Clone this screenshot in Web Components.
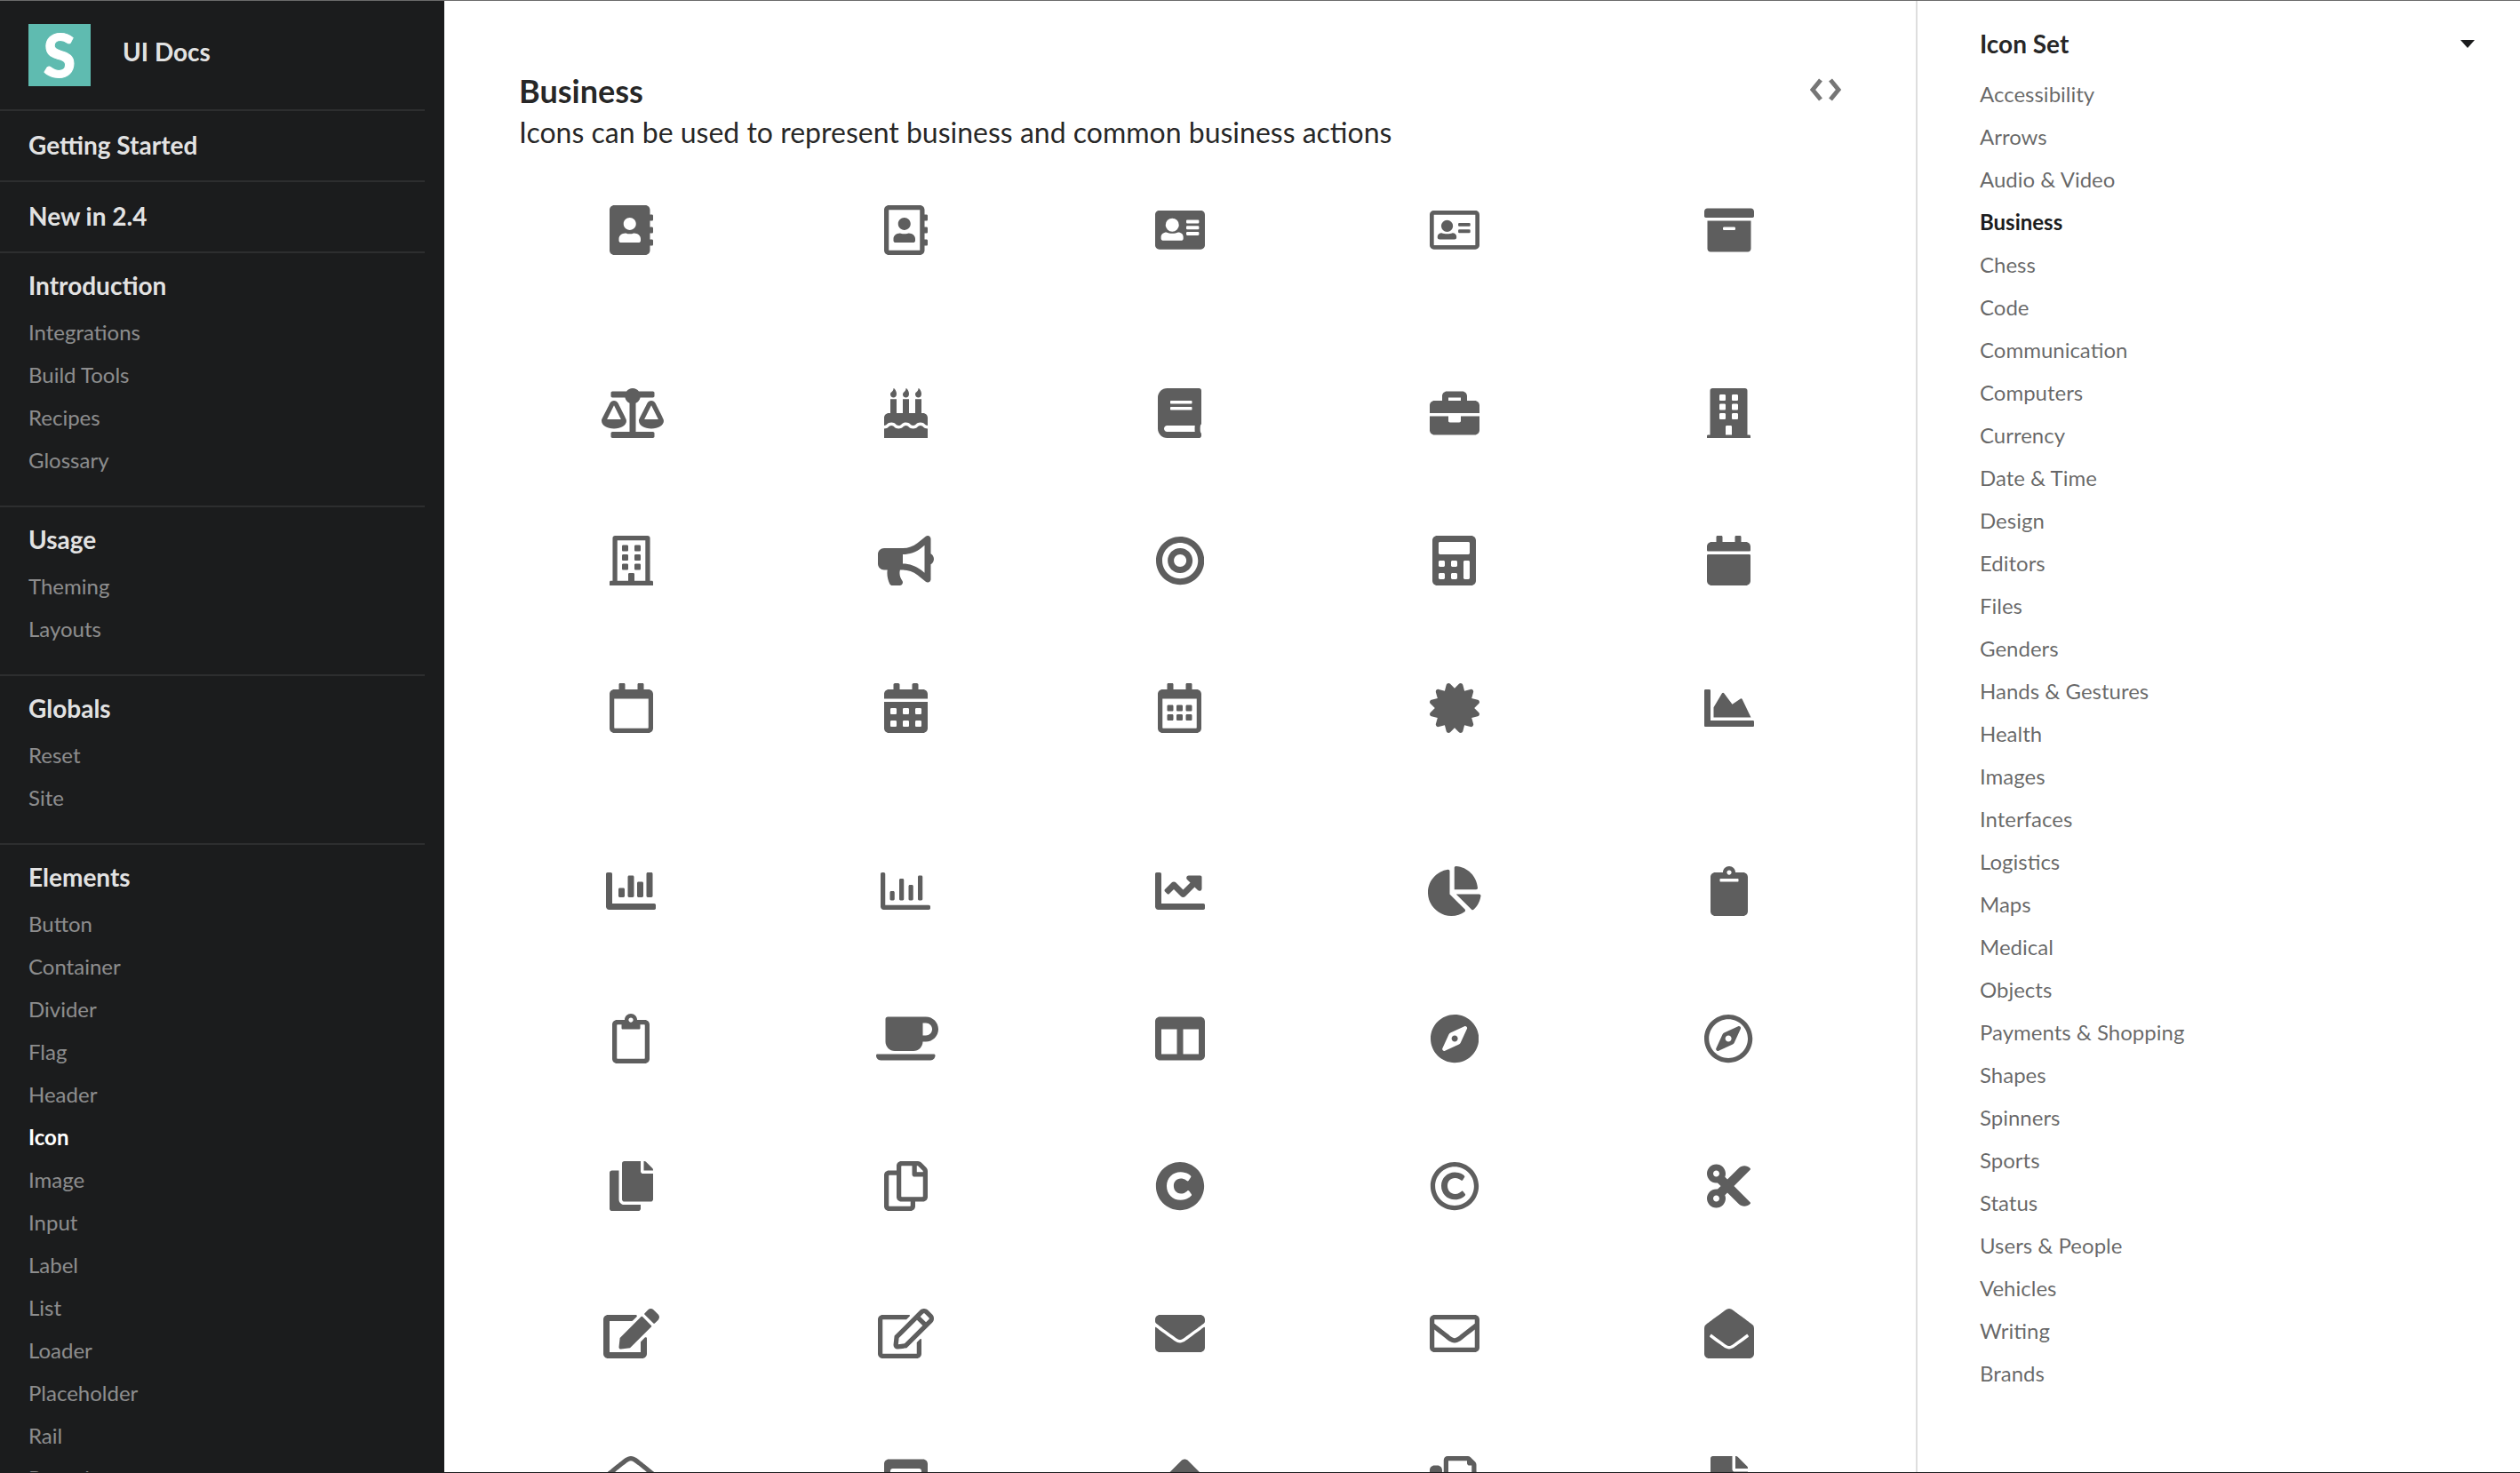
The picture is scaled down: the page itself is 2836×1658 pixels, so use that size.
<!DOCTYPE html>
<html>
<head>
<meta charset="utf-8">
<title>UI Docs</title>
<style>
	html, body { margin: 0; height: 100%; background: #fff; overflow: hidden; }
</style>
</head>
<body>

<ui-docs>
	<ui-sidebar slot="left">
		<ui-logo>UI Docs</ui-logo>
		<ui-side-head>Getting Started</ui-side-head>
		<ui-side-head>New in 2.4</ui-side-head>
		<ui-side-group label="Introduction">
			<ui-side-link>Integrations</ui-side-link>
			<ui-side-link>Build Tools</ui-side-link>
			<ui-side-link>Recipes</ui-side-link>
			<ui-side-link>Glossary</ui-side-link>
		</ui-side-group>
		<ui-side-group label="Usage">
			<ui-side-link>Theming</ui-side-link>
			<ui-side-link>Layouts</ui-side-link>
		</ui-side-group>
		<ui-side-group label="Globals">
			<ui-side-link>Reset</ui-side-link>
			<ui-side-link>Site</ui-side-link>
		</ui-side-group>
		<ui-side-group label="Elements">
			<ui-side-link>Button</ui-side-link>
			<ui-side-link>Container</ui-side-link>
			<ui-side-link>Divider</ui-side-link>
			<ui-side-link>Flag</ui-side-link>
			<ui-side-link>Header</ui-side-link>
			<ui-side-link active>Icon</ui-side-link>
			<ui-side-link>Image</ui-side-link>
			<ui-side-link>Input</ui-side-link>
			<ui-side-link>Label</ui-side-link>
			<ui-side-link>List</ui-side-link>
			<ui-side-link>Loader</ui-side-link>
			<ui-side-link>Placeholder</ui-side-link>
			<ui-side-link>Rail</ui-side-link>
			<ui-side-link>Reveal</ui-side-link>
			<ui-side-link>Segment</ui-side-link>
		</ui-side-group>
	</ui-sidebar>

	<ui-icon-section slot="main" heading="Business" text="Icons can be used to represent business and common business actions"
		icons="address-book address-book-o address-card address-card-o archive
			balance-scale birthday-cake book briefcase building
			building-o bullhorn bullseye calculator calendar
			calendar-o calendar-alt calendar-alt-o certificate chart-area
			chart-bar chart-bar-o chart-line chart-pie clipboard
			clipboard-o coffee columns compass compass-o
			copy copy-o copyright copyright-o cut
			edit edit-o envelope envelope-o envelope-open
			envelope-open-o envelope-square eraser fax file"></ui-icon-section>

	<ui-toc slot="right" label="Icon Set">
		<ui-toc-link>Accessibility</ui-toc-link>
		<ui-toc-link>Arrows</ui-toc-link>
		<ui-toc-link>Audio &amp; Video</ui-toc-link>
		<ui-toc-link active>Business</ui-toc-link>
		<ui-toc-link>Chess</ui-toc-link>
		<ui-toc-link>Code</ui-toc-link>
		<ui-toc-link>Communication</ui-toc-link>
		<ui-toc-link>Computers</ui-toc-link>
		<ui-toc-link>Currency</ui-toc-link>
		<ui-toc-link>Date &amp; Time</ui-toc-link>
		<ui-toc-link>Design</ui-toc-link>
		<ui-toc-link>Editors</ui-toc-link>
		<ui-toc-link>Files</ui-toc-link>
		<ui-toc-link>Genders</ui-toc-link>
		<ui-toc-link>Hands &amp; Gestures</ui-toc-link>
		<ui-toc-link>Health</ui-toc-link>
		<ui-toc-link>Images</ui-toc-link>
		<ui-toc-link>Interfaces</ui-toc-link>
		<ui-toc-link>Logistics</ui-toc-link>
		<ui-toc-link>Maps</ui-toc-link>
		<ui-toc-link>Medical</ui-toc-link>
		<ui-toc-link>Objects</ui-toc-link>
		<ui-toc-link>Payments &amp; Shopping</ui-toc-link>
		<ui-toc-link>Shapes</ui-toc-link>
		<ui-toc-link>Spinners</ui-toc-link>
		<ui-toc-link>Sports</ui-toc-link>
		<ui-toc-link>Status</ui-toc-link>
		<ui-toc-link>Users &amp; People</ui-toc-link>
		<ui-toc-link>Vehicles</ui-toc-link>
		<ui-toc-link>Writing</ui-toc-link>
		<ui-toc-link>Brands</ui-toc-link>
	</ui-toc>
</ui-docs>

<script>
// shapes: [viewBox width, path, extra]
const GLYPHS = {
	'address-book': [448, 'M436 160c6.6 0 12-5.4 12-12v-40c0-6.6-5.4-12-12-12h-20V48c0-26.5-21.5-48-48-48H48C21.5 0 0 21.5 0 48v416c0 26.5 21.5 48 48 48h320c26.5 0 48-21.5 48-48v-48h20c6.6 0 12-5.4 12-12v-40c0-6.6-5.4-12-12-12h-20v-64h20c6.6 0 12-5.4 12-12v-40c0-6.6-5.4-12-12-12h-20v-64h20zm-228-32c35.3 0 64 28.7 64 64s-28.7 64-64 64-64-28.7-64-64 28.7-64 64-64zm112 236.8c0 10.6-10 19.2-22.4 19.2H118.4C106 384 96 375.4 96 364.8v-19.2c0-31.8 30.1-57.6 67.2-57.6h5c12.3 5.1 25.7 8 39.8 8s27.6-2.9 39.8-8h5c37.1 0 67.2 25.8 67.2 57.6v19.2z'],
	'address-book-o': [448, 'M436 160c6.6 0 12-5.4 12-12v-40c0-6.6-5.4-12-12-12h-20V48c0-26.5-21.5-48-48-48H48C21.5 0 0 21.5 0 48v416c0 26.5 21.5 48 48 48h320c26.5 0 48-21.5 48-48v-48h20c6.6 0 12-5.4 12-12v-40c0-6.6-5.4-12-12-12h-20v-64h20c6.6 0 12-5.4 12-12v-40c0-6.6-5.4-12-12-12h-20v-64h20zm-68 304H48V48h320v416zM208 256c35.3 0 64-28.7 64-64s-28.7-64-64-64-64 28.7-64 64 28.7 64 64 64zm-89.6 128h179.2c12.4 0 22.4-8.6 22.4-19.2v-19.2c0-31.8-30.1-57.6-67.2-57.6-10.8 0-18.7 8-44.8 8-26.9 0-33.4-8-44.8-8-37.1 0-67.2 25.8-67.2 57.6v19.2c0 10.6 10 19.2 22.4 19.2z'],
	'address-card': [576, 'M528 32H48C21.5 32 0 53.5 0 80v352c0 26.5 21.5 48 48 48h480c26.5 0 48-21.5 48-48V80c0-26.5-21.5-48-48-48zM198 120a77 77 0 1 0 0 154a77 77 0 1 0 0-154zM130 282c20 10 42 14 68 14s48-4 68-14c36 0 60 24 60 54v18c0 14-12 24-26 24H96c-14 0-28-10-28-24v-18c0-30 26-54 62-54zM372 138h124a12 12 0 0 1 12 12v17a12 12 0 0 1-12 12H372a12 12 0 0 1-12-12v-17a12 12 0 0 1 12-12zM372 209h124a12 12 0 0 1 12 12v17a12 12 0 0 1-12 12H372a12 12 0 0 1-12-12v-17a12 12 0 0 1 12-12zM372 278h124a12 12 0 0 1 12 12v17a12 12 0 0 1-12 12H372a12 12 0 0 1-12-12v-17a12 12 0 0 1 12-12z', {eo: true, rw: 56}],
	'address-card-o': [576, 'M528 32H48C21.5 32 0 53.5 0 80v352c0 26.5 21.5 48 48 48h480c26.5 0 48-21.5 48-48V80c0-26.5-21.5-48-48-48zM48 80h480v352H48zM201 141a68 68 0 1 0 0 136a68 68 0 1 0 0-136zM138 290c18 8 38 12 63 12s45-4 63-12c28 0 46 18 46 42v12c0 12-10 20-22 20H114c-12 0-24-8-24-20v-12c0-24 20-42 48-42zM342 174h116a12 12 0 0 1 12 12v16a12 12 0 0 1-12 12H342a12 12 0 0 1-12-12v-16a12 12 0 0 1 12-12zM342 250h116a12 12 0 0 1 12 12v16a12 12 0 0 1-12 12H342a12 12 0 0 1-12-12v-16a12 12 0 0 1 12-12z', {eo: true, rw: 56}],
	'archive': [512, 'M32 448c0 17.7 14.3 32 32 32h384c17.7 0 32-14.3 32-32V160H32v288zm160-212c0-6.6 5.4-12 12-12h104c6.6 0 12 5.4 12 12v8c0 6.6-5.4 12-12 12H204c-6.6 0-12-5.4-12-12v-8zM480 32H32C14.3 32 0 46.3 0 64v48c0 8.8 7.2 16 16 16h480c8.8 0 16-7.2 16-16V64c0-17.7-14.3-32-32-32z'],
	'balance-scale': [640, 'M256 336h-.02c0-16.18 1.34-8.73-85.05-181.51-17.65-35.29-68.19-35.36-85.87 0C-2.06 328.75.02 320.33.02 336H0c0 44.18 57.31 80 128 80s128-35.82 128-80zM128 176l72 144H56l72-144zm511.98 160c0-16.18 1.34-8.73-85.05-181.51-17.65-35.29-68.19-35.36-85.87 0-87.12 174.26-85.04 165.84-85.04 181.51H384c0 44.18 57.31 80 128 80s128-35.82 128-80h-.02zM440 320l72-144 72 144H440zm88 128H352V153.25c23.51-10.29 41.16-31.48 46.39-57.25H528c8.84 0 16-7.16 16-16V48c0-8.84-7.16-16-16-16H383.64C369.04 12.68 346.09 0 320 0s-49.04 12.68-63.64 32H112c-8.84 0-16 7.16-16 16v32c0 8.84 7.16 16 16 16h129.61c5.23 25.76 22.87 46.96 46.39 57.25V448H112c-8.84 0-16 7.16-16 16v32c0 8.84 7.16 16 16 16h416c8.84 0 16-7.16 16-16v-32c0-8.84-7.16-16-16-16z', {dx: 3}],
	'birthday-cake': [448, 'M448 384c-28.02 0-31.26-32-74.5-32-43.43 0-46.825 32-74.75 32-27.695 0-31.454-32-74.75-32-42.842 0-47.218 32-74.5 32-28.148 0-31.202-32-74.75-32-43.547 0-46.653 32-74.75 32v-80c0-26.5 21.5-48 48-48h16V112h64v144h64V112h64v144h64V112h64v144h16c26.5 0 48 21.5 48 48v80zm0 128H0v-96c43.356 0 46.767-32 74.75-32 27.951 0 31.253 32 74.75 32 42.843 0 47.217-32 74.5-32 28.148 0 31.201 32 74.75 32 43.357 0 46.767-32 74.75-32 27.488 0 31.252 32 74.5 32v96zM96 96c-17.75 0-32-14.25-32-32 0-31 32-23 32-64 12 0 32 29.5 32 56s-14.25 40-32 40zm128 0c-17.75 0-32-14.25-32-32 0-31 32-23 32-64 12 0 32 29.5 32 56s-14.25 40-32 40zm128 0c-17.75 0-32-14.25-32-32 0-31 32-23 32-64 12 0 32 29.5 32 56s-14.25 40-32 40z'],
	'book': [448, 'M448 360V24c0-13.3-10.7-24-24-24H96C43 0 0 43 0 96v320c0 53 43 96 96 96h328c13.3 0 24-10.7 24-24v-16c0-7.5-3.5-14.3-8.9-18.7-4.2-15.4-4.2-59.3 0-74.7 5.4-4.3 8.9-11.1 8.9-18.6zM128 134c0-3.3 2.7-6 6-6h212c3.3 0 6 2.7 6 6v20c0 3.3-2.7 6-6 6H134c-3.3 0-6-2.7-6-6v-20zm0 64c0-3.3 2.7-6 6-6h212c3.3 0 6 2.7 6 6v20c0 3.3-2.7 6-6 6H134c-3.3 0-6-2.7-6-6v-20zm253.4 250H96c-17.7 0-32-14.3-32-32 0-17.6 14.4-32 32-32h285.4c-1.9 17.1-1.9 46.9 0 64z'],
	'briefcase': [512, 'M320 336c0 8.84-7.16 16-16 16h-96c-8.84 0-16-7.16-16-16v-48H0v144c0 25.6 22.4 48 48 48h416c25.6 0 48-22.4 48-48V288H320v48zm144-208h-80V80c0-25.6-22.4-48-48-48H176c-25.6 0-48 22.4-48 48v48H48c-25.6 0-48 22.4-48 48v80h512v-80c0-25.6-22.4-48-48-48zm-144 0H192V96h128v32z'],
	'building': [448, 'M436 480h-20V24c0-13.255-10.745-24-24-24H56C42.745 0 32 10.745 32 24v456H12c-6.627 0-12 5.373-12 12v20h448v-20c0-6.627-5.373-12-12-12zM128 76c0-6.627 5.373-12 12-12h40c6.627 0 12 5.373 12 12v40c0 6.627-5.373 12-12 12h-40c-6.627 0-12-5.373-12-12V76zm0 96c0-6.627 5.373-12 12-12h40c6.627 0 12 5.373 12 12v40c0 6.627-5.373 12-12 12h-40c-6.627 0-12-5.373-12-12v-40zm52 148h-40c-6.627 0-12-5.373-12-12v-40c0-6.627 5.373-12 12-12h40c6.627 0 12 5.373 12 12v40c0 6.627-5.373 12-12 12zm76 160h-64v-84c0-6.627 5.373-12 12-12h40c6.627 0 12 5.373 12 12v84zm64-172c0 6.627-5.373 12-12 12h-40c-6.627 0-12-5.373-12-12v-40c0-6.627 5.373-12 12-12h40c6.627 0 12 5.373 12 12v40zm0-96c0 6.627-5.373 12-12 12h-40c-6.627 0-12-5.373-12-12v-40c0-6.627 5.373-12 12-12h40c6.627 0 12 5.373 12 12v40zm0-96c0 6.627-5.373 12-12 12h-40c-6.627 0-12-5.373-12-12V76c0-6.627 5.373-12 12-12h40c6.627 0 12 5.373 12 12v40z'],
	'building-o': [448, 'M128 148v-40c0-6.6 5.4-12 12-12h40c6.6 0 12 5.4 12 12v40c0 6.6-5.4 12-12 12h-40c-6.6 0-12-5.4-12-12zm140 12h40c6.6 0 12-5.4 12-12v-40c0-6.6-5.4-12-12-12h-40c-6.6 0-12 5.4-12 12v40c0 6.6 5.4 12 12 12zm-128 96h40c6.6 0 12-5.4 12-12v-40c0-6.6-5.4-12-12-12h-40c-6.6 0-12 5.4-12 12v40c0 6.6 5.4 12 12 12zm128 0h40c6.6 0 12-5.4 12-12v-40c0-6.6-5.4-12-12-12h-40c-6.6 0-12 5.4-12 12v40c0 6.6 5.4 12 12 12zm-76 84v-40c0-6.6-5.4-12-12-12h-40c-6.6 0-12 5.4-12 12v40c0 6.6 5.4 12 12 12h40c6.6 0 12-5.4 12-12zm76 12h40c6.6 0 12-5.4 12-12v-40c0-6.6-5.4-12-12-12h-40c-6.6 0-12 5.4-12 12v40c0 6.6 5.4 12 12 12zm180 124v36H0v-36c0-6.6 5.4-12 12-12h19.5V24c0-13.3 10.7-24 24-24h337c13.3 0 24 10.7 24 24v440H436c6.6 0 12 5.4 12 12zM79.5 463H192v-67c0-6.6 5.4-12 12-12h40c6.6 0 12 5.4 12 12v67h112.5V49L80 48l-.5 415z'],
	'bullhorn': [576, 'M576 240c0-23.63-12.95-44.04-32-55.12V32.01C544 23.26 537.02 0 512 0c-7.12 0-14.19 2.38-19.98 7.02l-85.03 68.03C364.28 109.19 310.66 128 256 128H64c-35.35 0-64 28.65-64 64v96c0 35.35 28.65 64 64 64h33.7c-1.39 10.48-2.18 21.14-2.18 32 0 39.77 9.26 77.35 25.56 110.94 5.19 10.69 16.52 17.06 28.4 17.06h74.28c26.05 0 41.69-29.84 25.9-50.56-16.4-21.52-26.15-48.36-26.15-77.44 0-11.11 1.62-21.79 4.41-32H256c54.66 0 108.28 18.81 150.98 52.95l85.03 68.03a32.023 32.023 0 0 0 19.98 7.02c24.92 0 32-22.78 32-32V295.13C563.05 284.04 576 263.63 576 240zm-96 141.42l-33.05-26.44C392.95 311.78 325.12 288 256 288v-96c69.12 0 136.95-23.78 190.95-66.98L480 98.58v282.84z'],
	'bullseye': [496, 'M248 8C111.03 8 0 119.03 0 256s111.03 248 248 248 248-111.03 248-248S384.97 8 248 8zm0 432c-101.69 0-184-82.29-184-184 0-101.69 82.29-184 184-184 101.69 0 184 82.29 184 184 0 101.69-82.29 184-184 184zm0-312c-70.69 0-128 57.31-128 128s57.31 128 128 128 128-57.31 128-128-57.31-128-128-128zm0 192c-35.29 0-64-28.71-64-64s28.71-64 64-64 64 28.71 64 64-28.71 64-64 64z'],
	'calculator': [448, 'M400 0H48C22.4 0 0 22.4 0 48v416c0 25.6 22.4 48 48 48h352c25.6 0 48-22.4 48-48V48c0-25.6-22.4-48-48-48zM128 435.2c0 6.4-6.4 12.8-12.8 12.8H76.8c-6.4 0-12.8-6.4-12.8-12.8v-38.4c0-6.4 6.4-12.8 12.8-12.8h38.4c6.4 0 12.8 6.4 12.8 12.8v38.4zm0-128c0 6.4-6.4 12.8-12.8 12.8H76.8c-6.4 0-12.8-6.4-12.8-12.8v-38.4c0-6.4 6.4-12.8 12.8-12.8h38.4c6.4 0 12.8 6.4 12.8 12.8v38.4zm128 128c0 6.4-6.4 12.8-12.8 12.8h-38.4c-6.4 0-12.8-6.4-12.8-12.8v-38.4c0-6.4 6.4-12.8 12.8-12.8h38.4c6.4 0 12.8 6.4 12.8 12.8v38.4zm0-128c0 6.4-6.4 12.8-12.8 12.8h-38.4c-6.4 0-12.8-6.4-12.8-12.8v-38.4c0-6.4 6.4-12.8 12.8-12.8h38.4c6.4 0 12.8 6.4 12.8 12.8v38.4zm128 128c0 6.4-6.4 12.8-12.8 12.8h-38.4c-6.4 0-12.8-6.4-12.8-12.8V268.8c0-6.4 6.4-12.8 12.8-12.8h38.4c6.4 0 12.8 6.4 12.8 12.8v166.4zm0-256c0 6.4-6.4 12.8-12.8 12.8H76.8c-6.4 0-12.8-6.4-12.8-12.8V76.8C64 70.4 70.4 64 76.8 64h294.4c6.4 0 12.8 6.4 12.8 12.8v102.4z'],
	'calendar': [448, 'M12 192h424c6.6 0 12 5.4 12 12v260c0 26.5-21.5 48-48 48H48c-26.5 0-48-21.5-48-48V204c0-6.6 5.4-12 12-12zm436-44v-36c0-26.5-21.5-48-48-48h-48V12c0-6.6-5.4-12-12-12h-40c-6.6 0-12 5.4-12 12v52H160V12c0-6.6-5.4-12-12-12h-40c-6.6 0-12 5.4-12 12v52H48C21.5 64 0 85.5 0 112v36c0 6.6 5.4 12 12 12h424c6.6 0 12-5.4 12-12z'],
	'calendar-o': [448, 'M400 64h-48V12c0-6.6-5.4-12-12-12h-40c-6.6 0-12 5.4-12 12v52H160V12c0-6.6-5.4-12-12-12h-40c-6.6 0-12 5.4-12 12v52H48C21.5 64 0 85.5 0 112v352c0 26.5 21.5 48 48 48h352c26.5 0 48-21.5 48-48V112c0-26.5-21.5-48-48-48zm-6 400H54c-3.3 0-6-2.7-6-6V160h352v298c0 3.3-2.7 6-6 6z'],
	'calendar-alt': [448, 'M0 464c0 26.5 21.5 48 48 48h352c26.5 0 48-21.5 48-48V192H0v272zm320-196c0-6.6 5.4-12 12-12h40c6.6 0 12 5.4 12 12v40c0 6.6-5.4 12-12 12h-40c-6.6 0-12-5.4-12-12v-40zm0 128c0-6.6 5.4-12 12-12h40c6.6 0 12 5.4 12 12v40c0 6.6-5.4 12-12 12h-40c-6.6 0-12-5.4-12-12v-40zM192 268c0-6.6 5.4-12 12-12h40c6.6 0 12 5.4 12 12v40c0 6.6-5.4 12-12 12h-40c-6.6 0-12-5.4-12-12v-40zm0 128c0-6.6 5.4-12 12-12h40c6.6 0 12 5.4 12 12v40c0 6.6-5.4 12-12 12h-40c-6.6 0-12-5.4-12-12v-40zM64 268c0-6.6 5.4-12 12-12h40c6.6 0 12 5.4 12 12v40c0 6.6-5.4 12-12 12H76c-6.6 0-12-5.4-12-12v-40zm0 128c0-6.6 5.4-12 12-12h40c6.6 0 12 5.4 12 12v40c0 6.6-5.4 12-12 12H76c-6.6 0-12-5.4-12-12v-40zM400 64h-48V16c0-8.8-7.2-16-16-16h-32c-8.8 0-16 7.2-16 16v48H160V16c0-8.8-7.2-16-16-16h-32c-8.8 0-16 7.2-16 16v48H48C21.5 64 0 85.5 0 112v48h448v-48c0-26.5-21.5-48-48-48z'],
	'calendar-alt-o': [448, 'M148 288h-40c-6.6 0-12-5.4-12-12v-40c0-6.6 5.4-12 12-12h40c6.6 0 12 5.4 12 12v40c0 6.6-5.4 12-12 12zm108-12v-40c0-6.6-5.4-12-12-12h-40c-6.6 0-12 5.4-12 12v40c0 6.6 5.4 12 12 12h40c6.6 0 12-5.4 12-12zm96 0v-40c0-6.6-5.4-12-12-12h-40c-6.6 0-12 5.4-12 12v40c0 6.6 5.4 12 12 12h40c6.6 0 12-5.4 12-12zm-96 96v-40c0-6.6-5.4-12-12-12h-40c-6.6 0-12 5.4-12 12v40c0 6.6 5.4 12 12 12h40c6.6 0 12-5.4 12-12zm-96 0v-40c0-6.6-5.4-12-12-12h-40c-6.6 0-12 5.4-12 12v40c0 6.6 5.4 12 12 12h40c6.6 0 12-5.4 12-12zm192 0v-40c0-6.6-5.4-12-12-12h-40c-6.6 0-12 5.4-12 12v40c0 6.6 5.4 12 12 12h40c6.6 0 12-5.4 12-12zm96-260v352c0 26.5-21.5 48-48 48H48c-26.5 0-48-21.5-48-48V112c0-26.5 21.5-48 48-48h48V12c0-6.6 5.4-12 12-12h40c6.6 0 12 5.4 12 12v52h128V12c0-6.6 5.4-12 12-12h40c6.6 0 12 5.4 12 12v52h48c26.5 0 48 21.5 48 48zm-48 346V160H48v298c0 3.3 2.7 6 6 6h340c3.3 0 6-2.7 6-6z'],
	'certificate': [512, 'M458.622 255.92l45.985-45.005c13.708-12.977 7.316-36.039-10.664-40.339l-62.65-15.99 17.661-62.015c4.991-17.838-11.829-34.663-29.661-29.671l-61.994 17.667-15.984-62.671C337.085.197 313.765-6.276 300.99 7.228L256 53.57 211.011 7.229c-12.63-13.351-36.047-7.234-40.325 10.668l-15.984 62.671-61.995-17.667C74.87 57.907 58.056 74.738 63.046 92.572l17.661 62.015-62.65 15.99C.069 174.878-6.31 197.944 7.392 210.915l45.985 45.005-45.985 45.004c-13.708 12.977-7.316 36.039 10.664 40.339l62.65 15.99-17.661 62.015c-4.991 17.838 11.829 34.663 29.661 29.671l61.994-17.667 15.984 62.671c4.439 18.575 27.696 24.018 40.325 10.668L256 458.61l44.989 46.001c12.5 13.488 35.987 7.486 40.325-10.668l15.984-62.671 61.994 17.667c17.836 4.994 34.651-11.837 29.661-29.671l-17.661-62.015 62.65-15.99c17.987-4.302 24.366-27.367 10.664-40.339l-45.984-45.004z'],
	'chart-area': [512, 'M500 384c6.6 0 12 5.4 12 12v40c0 6.6-5.4 12-12 12H12c-6.6 0-12-5.4-12-12V76c0-6.6 5.4-12 12-12h40c6.6 0 12 5.4 12 12v308h436zM372.7 159.5L288 216l-85.3-113.7c-5.1-6.8-15.5-6.3-19.9 1L96 248v104h384l-89.9-187.8c-3.2-6.5-11.4-8.7-17.4-4.7z'],
	'chart-bar': [512, 'M332.8 320h38.4c6.4 0 12.8-6.4 12.8-12.8V172.8c0-6.4-6.4-12.8-12.8-12.8h-38.4c-6.4 0-12.8 6.4-12.8 12.8v134.4c0 6.4 6.4 12.8 12.8 12.8zm96 0h38.4c6.4 0 12.8-6.4 12.8-12.8V76.8c0-6.4-6.4-12.8-12.8-12.8h-38.4c-6.4 0-12.8 6.4-12.8 12.8v230.4c0 6.4 6.4 12.8 12.8 12.8zm-288 0h38.4c6.4 0 12.8-6.4 12.8-12.8v-70.4c0-6.4-6.4-12.8-12.8-12.8h-38.4c-6.4 0-12.8 6.4-12.8 12.8v70.4c0 6.4 6.4 12.8 12.8 12.8zm96 0h38.4c6.4 0 12.8-6.4 12.8-12.8V108.8c0-6.4-6.4-12.8-12.8-12.8h-38.4c-6.4 0-12.8 6.4-12.8 12.8v198.4c0 6.4 6.4 12.8 12.8 12.8zM496 384H64V80c0-8.84-7.16-16-16-16H16C7.16 64 0 71.16 0 80v336c0 17.67 14.33 32 32 32h464c8.84 0 16-7.16 16-16v-32c0-8.84-7.16-16-16-16z'],
	'chart-bar-o': [512, 'M396.8 352h22.4c6.4 0 12.8-6.4 12.8-12.8V108.8c0-6.4-6.4-12.8-12.8-12.8h-22.4c-6.4 0-12.8 6.4-12.8 12.8v230.4c0 6.4 6.4 12.8 12.8 12.8zm-192 0h22.4c6.4 0 12.8-6.4 12.8-12.8V140.8c0-6.4-6.4-12.8-12.8-12.8h-22.4c-6.4 0-12.8 6.4-12.8 12.8v198.4c0 6.4 6.4 12.8 12.8 12.8zm96 0h22.4c6.4 0 12.8-6.4 12.8-12.8V204.8c0-6.4-6.4-12.8-12.8-12.8h-22.4c-6.4 0-12.8 6.4-12.8 12.8v134.4c0 6.4 6.4 12.8 12.8 12.8zM496 400H48V80c0-8.84-7.16-16-16-16H16C7.16 64 0 71.16 0 80v336c0 17.67 14.33 32 32 32h464c8.84 0 16-7.16 16-16v-16c0-8.84-7.16-16-16-16zm-387.2-48h22.4c6.4 0 12.8-6.4 12.8-12.8v-70.4c0-6.4-6.4-12.8-12.8-12.8h-22.4c-6.4 0-12.8 6.4-12.8 12.8v70.4c0 6.4 6.4 12.8 12.8 12.8z'],
	'chart-line': [512, 'M496 384H64V80c0-8.84-7.16-16-16-16H16C7.16 64 0 71.16 0 80v336c0 17.67 14.33 32 32 32h464c8.84 0 16-7.16 16-16v-32c0-8.84-7.16-16-16-16zM464 96H345.94c-21.38 0-32.09 25.85-16.97 40.97l32.4 32.4L288 242.75l-73.37-73.37c-12.5-12.5-32.76-12.5-45.25 0l-68.69 68.69c-6.25 6.25-6.25 16.38 0 22.63l22.62 22.62c6.25 6.25 16.38 6.25 22.63 0L192 237.25l73.37 73.37c12.5 12.5 32.76 12.5 45.25 0l96-96 32.4 32.4c15.12 15.12 40.97 4.41 40.97-16.97V112c.01-8.84-7.15-16-16-16z'],
	'chart-pie': [544, 'M527.79 288H290.5l158.03 158.03c6.04 6.04 15.98 6.53 22.19.68 38.7-36.46 65.32-85.61 73.13-140.86 1.34-9.46-6.51-17.85-16.06-17.85zm-15.83-64.8C503.72 103.74 408.26 8.28 288.8.04 279.68-.59 272 7.1 272 16.24V240h223.77c9.14 0 16.82-7.68 16.19-16.8zM224 288V50.71c0-9.55-8.39-17.4-17.84-16.06C86.99 51.49-4.1 155.6.14 280.37 4.5 408.51 114.83 513.59 243.03 511.98c50.4-.63 96.97-16.87 135.26-44.03 7.9-5.6 8.42-17.23 1.57-24.08L224 288z'],
	'clipboard': [384, 'M384 112v352c0 26.51-21.49 48-48 48H48c-26.51 0-48-21.49-48-48V112c0-26.51 21.49-48 48-48h80c0-35.29 28.71-64 64-64s64 28.71 64 64h80c26.51 0 48 21.49 48 48zM192 40c-13.255 0-24 10.745-24 24s10.745 24 24 24 24-10.745 24-24-10.745-24-24-24m96 114v-20a6 6 0 0 0-6-6H102a6 6 0 0 0-6 6v20a6 6 0 0 0 6 6h180a6 6 0 0 0 6-6z'],
	'clipboard-o': [384, 'M336 64h-80c0-35.29-28.71-64-64-64s-64 28.71-64 64H48C21.49 64 0 85.49 0 112v352c0 26.51 21.49 48 48 48h288c26.51 0 48-21.49 48-48V112c0-26.51-21.49-48-48-48zM192 40c13.255 0 24 10.745 24 24s-10.745 24-24 24-24-10.745-24-24 10.745-24 24-24zm144 418a6 6 0 0 1-6 6H54a6 6 0 0 1-6-6V118a6 6 0 0 1 6-6h42v36c0 6.627 5.373 12 12 12h168c6.627 0 12-5.373 12-12v-36h42a6 6 0 0 1 6 6z'],
	'coffee': [640, 'M192 384h192c53 0 96-43 96-96h32c70.6 0 128-57.4 128-128S582.6 32 512 32H120c-13.3 0-24 10.7-24 24v232c0 53 43 96 96 96zM512 96c35.3 0 64 28.7 64 64s-28.7 64-64 64h-32V96h32zm47.7 384H48.3c-47.6 0-61-64-36-64h583.3c25 0 11.8 64-35.9 64z', {dx: 3}],
	'columns': [512, 'M464 32H48C21.49 32 0 53.49 0 80v352c0 26.51 21.49 48 48 48h416c26.51 0 48-21.49 48-48V80c0-26.51-21.49-48-48-48zM224 416H64V160h160v256zm224 0H288V160h160v256z'],
	'compass': [496, 'M225.38 233.37c-12.5 12.5-12.5 32.76 0 45.25 12.49 12.5 32.76 12.5 45.25 0 12.5-12.5 12.5-32.76 0-45.25-12.5-12.49-32.76-12.49-45.25 0zM248 8C111.03 8 0 119.03 0 256s111.03 248 248 248 248-111.03 248-248S384.97 8 248 8zm126.14 148.05L308.17 300.4a31.938 31.938 0 0 1-15.77 15.77l-144.34 65.97c-16.65 7.61-33.81-9.55-26.2-26.2l65.98-144.35a31.938 31.938 0 0 1 15.77-15.77l144.34-65.97c16.65-7.6 33.8 9.55 26.19 26.2z'],
	'compass-o': [496, 'M347.94 129.86L203.6 195.83a31.938 31.938 0 0 0-15.77 15.77l-65.97 144.34c-7.61 16.65 9.54 33.81 26.2 26.2l144.34-65.97a31.938 31.938 0 0 0 15.77-15.77l65.97-144.34c7.61-16.66-9.54-33.81-26.2-26.2zm-77.36 148.72c-12.47 12.47-32.69 12.47-45.16 0-12.47-12.47-12.47-32.69 0-45.16 12.47-12.47 32.69-12.47 45.16 0 12.47 12.47 12.47 32.69 0 45.16zM248 8C111.03 8 0 119.03 0 256s111.03 248 248 248 248-111.03 248-248S384.97 8 248 8zm0 448c-110.28 0-200-89.72-200-200S137.72 56 248 56s200 89.72 200 200-89.72 200-200 200z'],
	'copy': [448, 'M320 448v40c0 13.255-10.745 24-24 24H24c-13.255 0-24-10.745-24-24V120c0-13.255 10.745-24 24-24h72v296c0 30.879 25.121 56 56 56h168zm0-344V0H152c-13.255 0-24 10.745-24 24v368c0 13.255 10.745 24 24 24h272c13.255 0 24-10.745 24-24V128H344c-13.2 0-24-10.8-24-24zm120.971-31.029L375.029 7.029A24 24 0 0 0 358.059 0H352v96h96v-6.059a24 24 0 0 0-7.029-16.97z'],
	'copy-o': [448, 'M433.941 65.941l-51.882-51.882A48 48 0 0 0 348.118 0H176c-26.51 0-48 21.49-48 48v48H48c-26.51 0-48 21.49-48 48v320c0 26.51 21.49 48 48 48h224c26.51 0 48-21.49 48-48v-48h80c26.51 0 48-21.49 48-48V99.882a48 48 0 0 0-14.059-33.941zM266 464H54a6 6 0 0 1-6-6V150a6 6 0 0 1 6-6h74v224c0 26.51 21.49 48 48 48h96v42a6 6 0 0 1-6 6zm128-96H182a6 6 0 0 1-6-6V54a6 6 0 0 1 6-6h106v88c0 13.255 10.745 24 24 24h88v202a6 6 0 0 1-6 6zm6-256h-64V48h9.632c1.591 0 3.117.632 4.243 1.757l48.368 48.368a6 6 0 0 1 1.757 4.243V112z'],
	'copyright': [512, 'M256 8C119.033 8 8 119.033 8 256s111.033 248 248 248 248-111.033 248-248S392.967 8 256 8zm117.134 346.753c-1.592 1.867-39.776 45.731-109.851 45.731-84.692 0-144.484-63.26-144.484-145.567 0-81.303 62.004-143.401 143.762-143.401 66.957 0 101.965 37.315 103.422 38.904a12 12 0 0 1 1.238 14.623l-22.38 34.655c-4.049 6.267-12.774 7.351-18.234 2.295-.233-.214-26.529-23.88-61.88-23.88-46.116 0-73.916 33.575-73.916 76.082 0 39.602 25.514 79.692 74.277 79.692 38.697 0 65.28-28.338 65.544-28.625 5.132-5.565 14.059-5.033 18.508 1.053l24.547 33.572a12.001 12.001 0 0 1-.553 14.866z'],
	'copyright-o': [512, 'M256 8C119.033 8 8 119.033 8 256s111.033 248 248 248 248-111.033 248-248S392.967 8 256 8zm0 448c-110.532 0-200-89.451-200-200 0-110.531 89.451-200 200-200 110.532 0 200 89.451 200 200 0 110.532-89.451 200-200 200zm107.351-101.064c-9.614 9.712-45.53 41.396-104.065 41.396-82.43 0-140.484-61.425-140.484-141.567 0-79.152 60.275-139.401 139.762-139.401 55.531 0 88.738 26.62 97.593 34.779a11.965 11.965 0 0 1 1.936 15.322l-18.155 28.113c-3.841 5.95-11.966 7.282-17.499 2.921-8.595-6.776-31.814-22.538-61.708-22.538-48.303 0-77.916 35.33-77.916 80.082 0 41.589 26.888 83.692 78.277 83.692 32.657 0 56.843-19.039 65.726-27.225 5.27-4.857 13.596-4.039 17.82 1.738l19.865 27.17a11.947 11.947 0 0 1-1.152 15.518z'],
	'cut': [448, 'M278.06 256L444.48 89.57c4.69-4.69 4.69-12.29 0-16.97-32.8-32.8-85.99-32.8-118.79 0L210.18 188.12l-24.86-24.86c4.31-10.92 6.68-22.81 6.68-35.26 0-53.02-42.98-96-96-96S0 74.98 0 128s42.98 96 96 96c4.54 0 8.99-.32 13.36-.93L142.29 256l-32.93 32.93c-4.37-.61-8.83-.93-13.36-.93-53.02 0-96 42.98-96 96s42.98 96 96 96 96-42.98 96-96c0-12.45-2.37-24.34-6.68-35.26l24.86-24.86L325.69 439.4c32.8 32.8 85.99 32.8 118.79 0 4.69-4.68 4.69-12.28 0-16.97L278.06 256zM96 160c-17.64 0-32-14.36-32-32s14.36-32 32-32 32 14.36 32 32-14.36 32-32 32zm0 256c-17.64 0-32-14.36-32-32s14.36-32 32-32 32 14.36 32 32-14.36 32-32 32z'],
	'edit': [576, 'M402.6 83.2l90.2 90.2c3.8 3.8 3.8 10 0 13.8L274.4 405.6l-92.8 10.3c-12.4 1.4-22.9-9.1-21.5-21.5l10.3-92.8L388.8 83.2c3.8-3.8 10-3.8 13.8 0zm162-22.9l-48.8-48.8c-15.2-15.2-39.9-15.2-55.2 0l-35.4 35.4c-3.8 3.8-3.8 10 0 13.8l90.2 90.2c3.8 3.8 10 3.8 13.8 0l35.4-35.4c15.2-15.3 15.2-40 0-55.2zM384 346.2V448H64V128h229.8c3.2 0 6.2-1.3 8.5-3.5l40-40c7.6-7.6 2.2-20.5-8.5-20.5H48C21.5 64 0 85.5 0 112v352c0 26.5 21.5 48 48 48h352c26.5 0 48-21.5 48-48V306.2c0-10.7-12.9-16-20.5-8.5l-40 40c-2.2 2.3-3.5 5.3-3.5 8.5z'],
	'edit-o': [576, 'M402.3 344.9l32-32c5-5 13.7-1.5 13.7 5.7V464c0 26.5-21.5 48-48 48H48c-26.5 0-48-21.5-48-48V112c0-26.5 21.5-48 48-48h273.5c7.1 0 10.7 8.6 5.7 13.7l-32 32c-1.5 1.5-3.5 2.3-5.7 2.3H48v352h352V350.5c0-2.1.8-4.1 2.3-5.6zm156.6-201.8L296.3 405.7l-90.4 10c-26.2 2.9-48.5-19.2-45.6-45.6l10-90.4L432.9 17.1c22.9-22.9 59.9-22.9 82.7 0l43.2 43.2c22.9 22.9 22.9 60 .1 82.8zM460.1 174L402 115.9 216.2 301.8l-7.3 65.3 65.3-7.3L460.1 174zm64.8-79.7l-43.2-43.2c-4.1-4.1-10.8-4.1-14.8 0L436 82l58.1 58.1 30.9-30.9c4-4.2 4-10.8-.1-14.9z'],
	'envelope': [512, 'M502.3 190.8c3.9-3.1 9.7-.2 9.7 4.7V400c0 26.5-21.5 48-48 48H48c-26.5 0-48-21.5-48-48V195.6c0-5 5.7-7.8 9.7-4.7 22.4 17.4 52.1 39.5 154.1 113.6 21.1 15.4 56.7 47.8 92.2 47.6 35.7.3 72-32.8 92.3-47.6 102-74.1 131.6-96.3 154-113.7zM256 320c23.2.4 56.6-29.2 73.4-41.4 132.7-96.3 142.8-104.7 173.4-128.7 5.8-4.5 9.2-11.5 9.2-18.9v-19c0-26.5-21.5-48-48-48H48C21.5 64 0 85.5 0 112v19c0 7.4 3.4 14.3 9.2 18.9 30.6 23.9 40.7 32.4 173.4 128.7 16.8 12.2 50.2 41.8 73.4 41.4z'],
	'envelope-o': [512, 'M464 64H48C21.49 64 0 85.49 0 112v288c0 26.51 21.49 48 48 48h416c26.51 0 48-21.49 48-48V112c0-26.51-21.49-48-48-48zm0 48v40.805c-22.422 18.259-58.168 46.651-134.587 106.49-16.841 13.247-50.201 45.072-73.413 44.701-23.208.375-56.579-31.459-73.413-44.701C106.18 199.465 70.425 171.067 48 152.805V112h416zM48 400V214.398c22.914 18.251 55.409 43.862 104.938 82.646 21.857 17.205 60.134 55.186 103.062 54.955 42.717.231 80.509-37.199 103.053-54.947 49.528-38.783 82.032-64.401 104.947-82.653V400H48z'],
	'envelope-open': [512, 'M512 464c0 26.51-21.49 48-48 48H48c-26.51 0-48-21.49-48-48V200.724a48 48 0 0 1 18.387-37.776c24.913-19.529 45.501-35.365 164.2-121.511C199.412 29.17 232.797-.347 256 .003c23.198-.354 56.596 29.172 73.413 41.433 118.687 86.137 139.303 101.995 164.2 121.512A48 48 0 0 1 512 200.724V464zm-65.666-196.605c-2.563-3.728-7.7-4.595-11.339-1.907-22.845 16.873-55.462 40.705-105.582 77.079-16.825 12.266-50.21 41.781-73.413 41.43-23.211.344-56.559-29.143-73.413-41.43-50.114-36.37-82.734-60.204-105.582-77.079-3.639-2.688-8.776-1.821-11.339 1.907l-9.072 13.196a7.998 7.998 0 0 0 1.839 10.967c22.887 16.899 55.454 40.69 105.303 76.868 20.274 14.781 56.524 47.813 92.264 47.573 35.724.242 71.961-32.771 92.263-47.573 49.85-36.179 82.418-59.97 105.303-76.868a7.998 7.998 0 0 0 1.839-10.967l-9.071-13.196z'],
	'envelope-open-o': [512, 'M494.586 164.516c-4.697-3.883-111.723-89.95-135.251-108.657C337.231 38.191 299.437 0 256 0c-43.205 0-80.636 37.717-103.335 55.859-24.463 19.45-131.07 105.195-135.15 108.549A48.004 48.004 0 0 0 0 201.485V464c0 26.51 21.49 48 48 48h416c26.51 0 48-21.49 48-48V201.509a48 48 0 0 0-17.414-36.993zM464 458a6 6 0 0 1-6 6H54a6 6 0 0 1-6-6V203.347c0-1.813.816-3.526 2.226-4.665 15.87-12.814 108.793-87.554 132.364-106.293C200.755 78.88 232.398 48 256 48c23.693 0 55.857 31.369 73.41 44.389 23.573 18.741 116.503 93.493 132.366 106.316a5.99 5.99 0 0 1 2.224 4.663V458z'],
	'envelope-square': [448, 'M400 32H48C21.49 32 0 53.49 0 80v352c0 26.51 21.49 48 48 48h352c26.51 0 48-21.49 48-48V80c0-26.51-21.49-48-48-48zM178.117 262.104C87.429 196.287 88.353 196.121 64 177.167V152c0-13.255 10.745-24 24-24h272c13.255 0 24 10.745 24 24v25.167c-24.371 18.969-23.434 19.124-114.117 84.938-10.5 7.655-31.392 26.12-45.883 25.894-14.503.218-35.367-18.227-45.883-25.895zM384 217.775V360c0 13.255-10.745 24-24 24H88c-13.255 0-24-10.745-24-24V217.775c13.958 10.794 33.329 25.236 95.303 70.214 14.162 10.341 37.975 32.145 64.694 32.01 26.887.134 51.037-22.041 64.72-32.025 61.958-44.965 81.325-59.406 95.283-70.199z'],
	'eraser': [512, 'M497.941 273.941c18.745-18.745 18.745-49.137 0-67.882l-160-160c-18.745-18.745-49.136-18.746-67.883 0l-256 256c-18.745 18.745-18.745 49.137 0 67.882l96 96A48.004 48.004 0 0 0 144 480h356c6.627 0 12-5.373 12-12v-40c0-6.627-5.373-12-12-12H355.883l142.058-142.059zm-302.627-62.627l137.373 137.373L265.373 416H150.628l-80-80 124.686-124.686z'],
	'fax': [512, 'M128 144v320c0 26.51-21.49 48-48 48H48c-26.51 0-48-21.49-48-48V144c0-26.51 21.49-48 48-48h32c26.51 0 48 21.49 48 48zm384 64v256c0 26.51-21.49 48-48 48H192c-26.51 0-48-21.49-48-48V40c0-22.091 17.909-40 40-40h207.432a39.996 39.996 0 0 1 28.284 11.716l48.569 48.569A39.999 39.999 0 0 1 480 88.568v74.174c18.641 6.591 32 24.36 32 45.258zm-320-16h240V96h-24c-13.203 0-24-10.797-24-24V48H192v144zm96 204c0-6.627-5.373-12-12-12h-40c-6.627 0-12 5.373-12 12v40c0 6.627 5.373 12 12 12h40c6.627 0 12-5.373 12-12v-40zm0-128c0-6.627-5.373-12-12-12h-40c-6.627 0-12 5.373-12 12v40c0 6.627 5.373 12 12 12h40c6.627 0 12-5.373 12-12v-40zm128 128c0-6.627-5.373-12-12-12h-40c-6.627 0-12 5.373-12 12v40c0 6.627 5.373 12 12 12h40c6.627 0 12-5.373 12-12v-40zm0-128c0-6.627-5.373-12-12-12h-40c-6.627 0-12 5.373-12 12v40c0 6.627 5.373 12 12 12h40c6.627 0 12-5.373 12-12v-40z'],
	'file': [384, 'M224 136V0H24C10.7 0 0 10.7 0 24v464c0 13.3 10.7 24 24 24h336c13.3 0 24-10.7 24-24V160H248c-13.2 0-24-10.8-24-24zm160-14.1v6.1H256V0h6.1c6.4 0 12.5 2.5 17 7l97.9 98c4.5 4.5 7 10.6 7 16.9z']
}

const FONT = `"Lato", "Open Sans", sans-serif`

// whole page: top hairline, three columns, bottom hairline
class Docs extends HTMLElement {

	constructor(){

		super()

		this.attachShadow({mode: 'open'}).innerHTML = `
		<style>
			:host{
				display: grid;
				grid-template-columns: 500px 1fr 680px;
				height: 100vh;
				box-sizing: border-box;
				border-top: 1px solid #6b6b6b;
				border-bottom: 1px solid #1b1c1d;
				overflow: hidden;
				font-family: ${FONT};
			}
		</style>
		<slot name="left"></slot>
		<slot name="main"></slot>
		<slot name="right"></slot>`

	}

}

class Sidebar extends HTMLElement {

	constructor(){

		super()

		this.attachShadow({mode: 'open'}).innerHTML = `
		<style>
			:host{
				display: block;
				min-height: 0;
				overflow: hidden;
				background: #1b1c1d;
				padding-right: 22px;
			}
		</style>
		<slot></slot>`

	}

}

class Logo extends HTMLElement {

	constructor(){

		super()

		this.attachShadow({mode: 'open'}).innerHTML = `
		<style>
			:host{
				display: flex;
				align-items: flex-start;
				padding: 26px 0 0 32px;
				height: 96px;
				border-bottom: 2px solid #2d2e2f;
			}
			.mark{
				width: 70px;
				height: 70px;
				background: #5fbbb0;
				color: #fff;
				font-weight: 900;
				font-size: 66px;
				line-height: 70px;
				text-align: center;
				-webkit-text-stroke: 1px #fff;
			}
			.name{
				margin: 17px 0 0 36px;
				font-size: 28px;
				line-height: 28px;
				font-weight: 700;
				color: rgba(255,255,255,.9);
			}
		</style>
		<div class="mark">S</div>
		<div class="name"><slot></slot></div>`

	}

}

class SideHead extends HTMLElement {

	constructor(){

		super()

		this.attachShadow({mode: 'open'}).innerHTML = `
		<style>
			:host{
				display: flex;
				align-items: center;
				height: 78px;
				padding-left: 32px;
				border-bottom: 2px solid #2d2e2f;
				font-size: 28px;
				font-weight: 700;
				color: rgba(255,255,255,.9);
			}
			span{ margin-top: -3px; }
		</style>
		<span><slot></slot></span>`

	}

}

class SideGroup extends HTMLElement {

	constructor(){

		super()

		this.attachShadow({mode: 'open'}).innerHTML = `
		<style>
			:host{
				display: block;
				padding: 22px 0 27px 32px;
				border-bottom: 2px solid #2d2e2f;
			}
			.label{
				font-size: 28px;
				line-height: 28px;
				font-weight: 700;
				color: rgba(255,255,255,.9);
				margin-bottom: 15px;
			}
		</style>
		<div class="label"></div>
		<slot></slot>`

	}

	connectedCallback(){

		this.shadowRoot.querySelector('.label').textContent = this.getAttribute('label')

	}

}

class SideLink extends HTMLElement {

	constructor(){

		super()

		this.attachShadow({mode: 'open'}).innerHTML = `
		<style>
			:host{
				display: block;
				height: 48px;
				line-height: 48px;
				font-size: 24px;
				color: rgba(255,255,255,.5);
			}
			:host([active]){
				color: #fff;
				font-weight: 700;
			}
		</style>
		<slot></slot>`

	}

}

class Glyph extends HTMLElement {

	constructor(){

		super()

		this.attachShadow({mode: 'open'})

	}

	connectedCallback(){

		const [w, d, extra = {}] = GLYPHS[this.getAttribute('name')]
		const rw = extra.rw || w / 512 * 56
		const rule = extra.eo ? 'fill-rule="evenodd"' : ''

		this.shadowRoot.innerHTML = `
		<style>
			:host{
				display: flex;
				align-items: center;
				justify-content: center;
				height: 56px;
				padding-left: ${extra.dx || 0}px;
				color: #5e5e5e;
			}
			svg{ display: block; fill: currentColor; }
		</style>
		<svg width="${rw}" viewBox="0 0 ${w} 512"><path ${rule} d="${d}"/></svg>`

	}

}

class IconSection extends HTMLElement {

	constructor(){

		super()

		this.attachShadow({mode: 'open'})

	}

	connectedCallback(){

		const cells = this.getAttribute('icons').trim().split(/\s+/)
			.map(n => `<ui-glyph name="${n}"></ui-glyph>`).join('')

		this.shadowRoot.innerHTML = `
		<style>
			:host{
				display: block;
				min-height: 0;
				overflow: hidden;
				padding: 81px 56px 0;
			}
			header{
				display: flex;
				justify-content: space-between;
				padding: 0 28px;
			}
			h2{
				margin: 0;
				font-size: 36px;
				line-height: 40px;
				font-weight: 700;
				color: rgba(0,0,0,.87);
			}
			p{
				margin: 7px 0 0;
				font-size: 32px;
				line-height: 40px;
				color: rgba(0,0,0,.87);
			}
			svg{
				display: block;
				margin-top: 6px;
				fill: none;
				stroke: #767676;
				stroke-width: 5;
			}
			.grid{
				display: grid;
				grid-template-columns: repeat(5, 1fr);
				grid-template-rows: 206px 166px 166px 206px 166px 166px 166px 166px 166px;
				margin-top: 62px;
			}
		</style>
		<header>
			<div>
				<h2>${this.getAttribute('heading')}</h2>
				<p>${this.getAttribute('text')}</p>
			</div>
			<svg width="35" height="26" viewBox="0 0 35 26"><polyline points="12,2 3,13 12,24"/><polyline points="23,2 32,13 23,24"/></svg>
		</header>
		<div class="grid">${cells}</div>`

	}

}

class Toc extends HTMLElement {

	constructor(){

		super()

		this.attachShadow({mode: 'open'}).innerHTML = `
		<style>
			:host{
				display: block;
				min-height: 0;
				overflow: hidden;
				border-left: 2px solid #dedede;
				padding: 34px 51px 0 70px;
			}
			.head{
				display: flex;
				align-items: center;
				justify-content: space-between;
				height: 28px;
				margin-bottom: 19px;
				font-size: 28px;
				font-weight: 700;
				color: rgba(0,0,0,.87);
			}
			.caret{
				width: 0;
				height: 0;
				border-left: 8px solid transparent;
				border-right: 8px solid transparent;
				border-top: 9px solid #1b1c1d;
			}
		</style>
		<div class="head"><span class="label"></span><span class="caret"></span></div>
		<slot></slot>`

	}

	connectedCallback(){

		this.shadowRoot.querySelector('.label').textContent = this.getAttribute('label')

	}

}

class TocLink extends HTMLElement {

	constructor(){

		super()

		this.attachShadow({mode: 'open'}).innerHTML = `
		<style>
			:host{
				display: block;
				height: 48px;
				line-height: 48px;
				font-size: 24px;
				color: rgba(0,0,0,.6);
			}
			:host([active]){
				color: #1b1c1d;
				font-weight: 700;
			}
		</style>
		<slot></slot>`

	}

}

customElements.define('ui-docs', Docs)
customElements.define('ui-sidebar', Sidebar)
customElements.define('ui-logo', Logo)
customElements.define('ui-side-head', SideHead)
customElements.define('ui-side-group', SideGroup)
customElements.define('ui-side-link', SideLink)
customElements.define('ui-glyph', Glyph)
customElements.define('ui-icon-section', IconSection)
customElements.define('ui-toc', Toc)
customElements.define('ui-toc-link', TocLink)
</script>

</body>
</html>
